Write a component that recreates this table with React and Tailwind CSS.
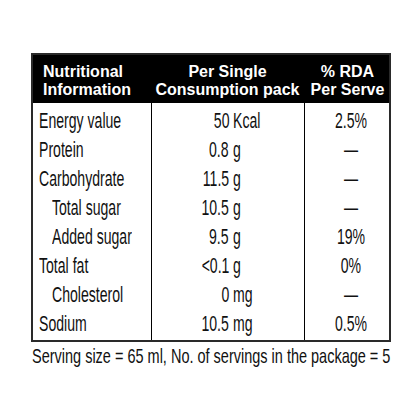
const rows = [
  { label: 'Energy value', num: '50', unit: 'Kcal', rda: '2.5%' },
  { label: 'Protein', num: '0.8', unit: 'g', rda: '—' },
  { label: 'Carbohydrate', num: '11.5', unit: 'g', rda: '—' },
  { label: 'Total sugar', num: '10.5', unit: 'g', rda: '—', indent: true },
  { label: 'Added sugar', num: '9.5', unit: 'g', rda: '19%', indent: true },
  { label: 'Total fat', num: '<0.1', unit: 'g', rda: '0%' },
  { label: 'Cholesterol', num: '0', unit: 'mg', rda: '—', indent: true },
  { label: 'Sodium', num: '10.5', unit: 'mg', rda: '0.5%' },
];

// the print uses a tall condensed face; squeeze Liberation Sans to match
const Narrow = ({ children, origin = 'origin-left', squeeze = 'scale-x-[0.64]' }) => (
  <span className={`inline-block whitespace-nowrap ${squeeze} ${origin}`}>{children}</span>
);

export default function App() {
  return (
    <div className="w-[420px] h-[420px] overflow-hidden bg-white pt-[53px] pl-[31px] text-[#111] font-['Liberation_Sans',Arial,sans-serif]">
      <div className="w-[360px] border-2 border-[#2a2a2a]">
        <div className="grid grid-cols-[118px_153px_1fr] bg-black text-white font-bold text-[16px] leading-[18px] h-[48px] pt-[4px]">
          <div className="flex flex-col justify-center pl-[10px]">
            <span>Nutritional</span>
            <span>Information</span>
          </div>
          <div className="flex flex-col justify-center items-center">
            <span>Per Single</span>
            <span className="whitespace-nowrap">Consumption pack</span>
          </div>
          <div className="flex flex-col justify-center items-center pl-[2px]">
            <span>% RDA</span>
            <span>Per Serve</span>
          </div>
        </div>
        <div className="grid grid-cols-[118px_153px_1fr] text-[22px] leading-[29px]">
          <div className="flex flex-col pt-[3px] pb-[2px]">
            {rows.map((r) => (
              <div key={r.label} className={r.indent ? 'pl-[19px]' : 'pl-[6px]'}>
                <Narrow>{r.label}</Narrow>
              </div>
            ))}
          </div>
          <div className="flex flex-col pt-[3px] pb-[2px] border-l border-black">
            {rows.map((r) => (
              <div key={r.label} className="flex">
                <div className="w-[77px] text-right">
                  <Narrow origin="origin-right">{r.num}</Narrow>
                </div>
                <div className="pl-[4px]">
                  <Narrow>{r.unit}</Narrow>
                </div>
              </div>
            ))}
          </div>
          <div className="flex flex-col pt-[3px] pb-[2px] pl-[8px] border-l border-black items-center">
            {rows.map((r) => (
              <div key={r.label}>
                <Narrow origin="origin-center">{r.rda}</Narrow>
              </div>
            ))}
          </div>
        </div>
      </div>
      <p className="text-[21px] leading-[24px] mt-[2px] pl-[1px]">
        <Narrow squeeze="scale-x-[0.69]">Serving size = 65 ml, No. of servings in the package = 5</Narrow>
      </p>
    </div>
  );
}
